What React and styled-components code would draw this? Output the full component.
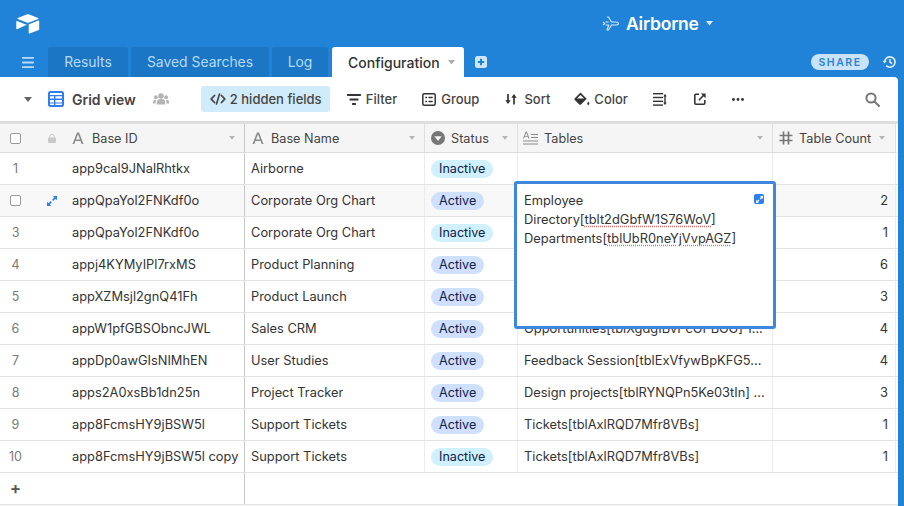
import React from 'react';
import styled, { createGlobalStyle } from 'styled-components';

const columns = '245px 180px 93px 255px 123px';

const rows = [
    { num: 1, id: 'app9cal9JNalRhtkx', name: 'Airborne', status: 'Inactive', tables: '', count: '' },
    { num: 2, id: 'appQpaYol2FNKdf0o', name: 'Corporate Org Chart', status: 'Active', tables: '', count: 2, hovered: true },
    { num: 3, id: 'appQpaYol2FNKdf0o', name: 'Corporate Org Chart', status: 'Inactive', tables: '', count: 1 },
    { num: 4, id: 'appj4KYMyIPl7rxMS', name: 'Product Planning', status: 'Active', tables: '', count: 6 },
    { num: 5, id: 'appXZMsjl2gnQ41Fh', name: 'Product Launch', status: 'Active', tables: '', count: 3 },
    { num: 6, id: 'appW1pfGBSObncJWL', name: 'Sales CRM', status: 'Active', tables: 'Opportunities[tblXgdgIBvPcGPBGG] 1...', count: 4 },
    { num: 7, id: 'appDp0awGIsNIMhEN', name: 'User Studies', status: 'Active', tables: 'Feedback Session[tblExVfywBpKFG5...', count: 4 },
    { num: 8, id: 'apps2A0xsBb1dn25n', name: 'Project Tracker', status: 'Active', tables: 'Design projects[tblRYNQPn5Ke03tIn] ...', count: 3 },
    { num: 9, id: 'app8FcmsHY9jBSW5l', name: 'Support Tickets', status: 'Active', tables: 'Tickets[tblAxlRQD7Mfr8VBs]', count: 1 },
    { num: 10, id: 'app8FcmsHY9jBSW5l copy', name: 'Support Tickets', status: 'Inactive', tables: 'Tickets[tblAxlRQD7Mfr8VBs]', count: 1 },
];

const Caret = ({ size = 8, color = '#666' }) => (
    <svg width={size} height={size * 0.625} viewBox="0 0 8 5">
        <path d="M0 0h8L4 5z" fill={color} />
    </svg>
);

const Logo = () => (
    <svg width="24" height="20" viewBox="0 0 24 20">
        <path d="M10.6.4 1.8 3.9c-.5.2-.5.9 0 1.100l8.900 3.500c.8.3 1.700.3 2.500 0l8.900-3.500c.5-.2.5-.9 0-1.100L13.200.4c-.8-.3-1.800-.3-2.600 0z" fill="#fff" />
        <path d="M12.700 10.800v8.300c0 .4.400.7.800.5l9.300-3.700c.3-.1.400-.3.400-.6V7c0-.4-.4-.7-.8-.5l-9.300 3.700c-.2.100-.4.300-.4.600z" fill="#fff" />
        <path d="M10.600 10.700 1.200 15.300c-.4.200-.9-.1-.9-.5V7.500c0-.2.100-.3.200-.4.100-.1.200-.1.300-.1l.2.100 9.500 3.700c.4.100.4.700.100.900z" fill="#fff" />
    </svg>
);

const Plane = () => (
    <svg width="17" height="15" viewBox="0 0 17 15" fill="none" stroke="#d5e9fa" strokeWidth="1.100" strokeLinejoin="round">
        <path d="M1 5.800 2.700 7.500 1 9.200M5 1h1.500l3 5h4.300c1.500 0 2.700.7 2.700 1.500S15.300 9 13.800 9H9.500l-3 5H5l1.700-5H3.500M6.700 6H3.500" />
    </svg>
);

const Hamburger = () => (
    <svg width="12" height="11" viewBox="0 0 12 11" fill="#b9dcf7">
        <rect y="0" width="12" height="1.800" rx=".5" />
        <rect y="4.600" width="12" height="1.800" rx=".5" />
        <rect y="9.200" width="12" height="1.800" rx=".5" />
    </svg>
);

const AddTab = () => (
    <svg width="12" height="12" viewBox="0 0 12 12">
        <rect width="12" height="12" rx="2.500" fill="#cfe6f9" />
        <path d="M6 2.800v6.400M2.800 6h6.400" stroke="#2083d7" strokeWidth="2" />
    </svg>
);

const History = () => (
    <svg width="15" height="14" viewBox="0 0 15 14" fill="none" stroke="#e2f0fb" strokeWidth="1.700">
        <path d="M2.700 7a5.200 5.200 0 1 1 1.500 3.700" />
        <path d="M.5 5.800h4.300L2.700 8.500z" fill="#e2f0fb" stroke="none" />
        <path d="M8 4v3.300l2.200 1.200" strokeWidth="1.500" />
    </svg>
);

const GridIcon = () => (
    <svg width="16" height="16" viewBox="0 0 16 16">
        <rect width="16" height="16" rx="2.500" fill="#2d7ff0" />
        <path d="M2 5.200h4v2.400H2zM7.400 5.200H14v2.400H7.400zM2 9h4v2.400H2zM7.400 9H14v2.400H7.400zM2 12.600h4V14H2zM7.400 12.600H14V14H7.400zM2 2h12v2H2z" fill="#fff" />
    </svg>
);

const People = () => (
    <svg width="16" height="12" viewBox="0 0 16 12" fill="#b4b4b4">
        <circle cx="8" cy="3" r="2.800" />
        <circle cx="2.900" cy="4.200" r="1.900" />
        <circle cx="13.100" cy="4.200" r="1.900" />
        <path d="M3.800 11.500V9c0-2 1.900-3 4.200-3s4.200 1 4.200 3v2.500zM0 10.500V8.700c0-1.300 1.100-2 2.700-2l.6.100c-.5.600-.7 1.300-.7 2.100v1.600zM16 10.500V8.700c0-1.300-1.100-2-2.700-2l-.6.100c.5.600.7 1.300.7 2.100v1.600z" />
    </svg>
);

const HiddenIcon = () => (
    <svg width="16" height="12" viewBox="0 0 16 12" fill="none" stroke="#444" strokeWidth="1.800" strokeLinecap="round" strokeLinejoin="round">
        <path d="M4.500 2.500 1.200 6l3.300 3.500M11.500 2.500 14.800 6l-3.300 3.500" />
        <path d="M9.500 1 6.500 11" strokeWidth="1.600" />
    </svg>
);

const FilterIcon = () => (
    <svg width="14" height="11" viewBox="0 0 14 11" fill="#333">
        <rect width="14" height="1.900" rx=".6" />
        <rect x="2.500" y="4.500" width="9" height="1.900" rx=".6" />
        <rect x="5" y="9" width="4" height="1.900" rx=".6" />
    </svg>
);

const GroupIcon = () => (
    <svg width="14" height="13" viewBox="0 0 14 13" fill="none" stroke="#333" strokeWidth="1.500">
        <rect x=".8" y=".8" width="12.400" height="11.400" rx="1.500" />
        <path d="M3.300 4.500H5M6.500 4.500h4.200M3.300 8.500H5M6.500 8.500h4.200" />
    </svg>
);

const SortIcon = () => (
    <svg width="12" height="12" viewBox="0 0 12 12" fill="none" stroke="#333" strokeWidth="1.700">
        <path d="M3 1v8.500M9 3v8.500" />
        <path d="M.3 7.200h5.400L3 11zM6.300 4.800h5.400L9 1z" fill="#333" stroke="none" />
    </svg>
);

const ColorIcon = () => (
    <svg width="16" height="14" viewBox="0 0 16 14" fill="#333">
        <path d="M6.500.6 12.700 6.800 7 12.500c-.5.500-1.200.5-1.700 0L.8 8c-.5-.5-.5-1.200 0-1.700z" />
        <path d="M6.500 3 2.900 6.600h7.200z" fill="#fff" />
        <path d="M14.300 9.500c.7 1 1.100 1.700 1.100 2.300a1.100 1.100 0 0 1-2.200 0c0-.6.400-1.300 1.100-2.300z" />
    </svg>
);

const RowHeightIcon = () => (
    <svg width="14" height="13" viewBox="0 0 14 13" fill="#333">
        <rect width="10" height="1.400" />
        <rect y="3.800" width="10" height="1.400" />
        <rect y="7.600" width="10" height="1.400" />
        <rect y="11.400" width="10" height="1.400" />
        <path d="M12 3v7" stroke="#333" strokeWidth="1.400" />
        <path d="M10.300 3.500 12 .8l1.700 2.700zM10.300 9.500 12 12.200l1.700-2.700z" />
    </svg>
);

const ShareIcon = () => (
    <svg width="12" height="12" viewBox="0 0 12 12" fill="none" stroke="#333" strokeWidth="1.600">
        <path d="M5 1.200H1.800a1 1 0 0 0-1 1v8a1 1 0 0 0 1 1h8a1 1 0 0 0 1-1V7" />
        <path d="M4.800 7.200 10 2" />
        <path d="M6.800.4h4.800v4.800z" fill="#333" stroke="none" />
    </svg>
);

const Dots = () => (
    <svg width="12" height="3" viewBox="0 0 12 3" fill="#333">
        <circle cx="1.500" cy="1.500" r="1.400" />
        <circle cx="6" cy="1.500" r="1.400" />
        <circle cx="10.500" cy="1.500" r="1.400" />
    </svg>
);

const SearchIcon = () => (
    <svg width="15" height="15" viewBox="0 0 15 15" fill="none" stroke="#777" strokeWidth="2">
        <circle cx="6" cy="6" r="4.600" />
        <path d="M9.500 9.500 14 14" strokeLinecap="round" />
    </svg>
);

const Lock = () => (
    <svg width="8" height="9" viewBox="0 0 8 9" fill="#c9c9c9">
        <rect y="3.500" width="8" height="5.500" rx="1" />
        <path d="M1.800 4V2.500a2.200 2.200 0 0 1 4.400 0V4" fill="none" stroke="#c9c9c9" />
    </svg>
);

const TextType = () => (
    <svg width="12" height="12" viewBox="0 0 12 12">
        <path d="M.5 12 5 .5h2L11.500 12H9.700L8.600 9H3.400L2.300 12zM4 7.400h4L6 2.300z" fill="#8a8a8a" />
    </svg>
);

const SelectType = () => (
    <svg width="14" height="14" viewBox="0 0 14 14">
        <circle cx="7" cy="7" r="7" fill="#777" />
        <path d="M3.300 5.300h7.400L7 10z" fill="#f5f5f5" />
    </svg>
);

const LongTextType = () => (
    <svg width="16" height="14" viewBox="0 0 16 14" fill="#8a8a8a">
        <path d="M0 7.500 2.700.5h1.100L6.500 7.500H5.400L4.800 5.800H1.700l-.6 1.700zM2 4.900h2.500L3.300 1.800z" />
        <rect x="8" y="3" width="7" height="1" />
        <rect x="8" y="6" width="7" height="1" />
        <rect y="9.500" width="15" height="1" />
        <rect y="12.500" width="15" height="1" />
    </svg>
);

const NumberType = () => (
    <svg width="14" height="14" viewBox="0 0 14 14" fill="none" stroke="#777" strokeWidth="1.700">
        <path d="M4.500.5v13M9.500.5v13M.5 4.500h13M.5 9.500h13" />
    </svg>
);

const ExpandIcon = ({ color = '#2d7ff0' }) => (
    <svg width="10" height="10" viewBox="0 0 10 10" fill={color}>
        <path d="M5.800 0H10v4.200L8.500 2.700 6.300 4.900 5.100 3.700l2.200-2.200zM4.200 10H0V5.800l1.500 1.500 2.200-2.200 1.200 1.200-2.200 2.200z" />
    </svg>
);

const Check = styled.span`
    width: 11px;
    height: 11px;
    border: 1px solid #9a9a9a;
    border-radius: 2px;
    background: #fff;
    box-sizing: border-box;
`;

function App() {
    return (
        <Page>
            <GlobalStyle />
            <TopBar>
                <LogoSlot><Logo /></LogoSlot>
                <BaseTitle>
                    <Plane />
                    <BaseName>Airborne</BaseName>
                    <Caret size={7} color="#d9ecfb" />
                </BaseTitle>
            </TopBar>
            <TabBar>
                <MenuSlot><Hamburger /></MenuSlot>
                <Tab $width={80}>Results</Tab>
                <Tab $width={138}>Saved Searches</Tab>
                <Tab $width={56}>Log</Tab>
                <ActiveTab>
                    Configuration
                    <Caret size={7} color="#aaa" />
                </ActiveTab>
                <AddSlot><AddTab /></AddSlot>
                <TabSpacer />
                <ShareButton>SHARE</ShareButton>
                <History />
            </TabBar>
            <Panel>
                <Toolbar>
                    <ViewCaret><Caret size={8} color="#666" /></ViewCaret>
                    <GridIcon />
                    <ViewName>Grid view</ViewName>
                    <People />
                    <HiddenButton><HiddenIcon />2 hidden fields</HiddenButton>
                    <ToolButton $left={17}><FilterIcon />Filter</ToolButton>
                    <ToolButton $left={25}><GroupIcon />Group</ToolButton>
                    <ToolButton $left={26} $gap={7}><SortIcon />Sort</ToolButton>
                    <ToolButton $left={24} $gap={4}><ColorIcon />Color</ToolButton>
                    <ToolButton $left={25}><RowHeightIcon /></ToolButton>
                    <ToolButton $left={27}><ShareIcon /></ToolButton>
                    <ToolButton $left={26}><Dots /></ToolButton>
                    <TabSpacer />
                    <SearchSlot><SearchIcon /></SearchSlot>
                </Toolbar>
                <Grid>
                    <HeaderRow>
                        <LeftHeaderCell>
                            <CheckSlot><Check /></CheckSlot>
                            <HandleSlot><Lock /></HandleSlot>
                            <HeaderLabel $gap={8}><TextType />Base ID</HeaderLabel>
                            <Caret size={6} color="#b5b5b5" />
                        </LeftHeaderCell>
                        <HeaderCell>
                            <HeaderLabel><TextType />Base Name</HeaderLabel>
                            <Caret size={6} color="#b5b5b5" />
                        </HeaderCell>
                        <HeaderCell $left={6}>
                            <HeaderLabel $gap={6}><SelectType />Status</HeaderLabel>
                            <Caret size={6} color="#b5b5b5" />
                        </HeaderCell>
                        <HeaderCell $left={5}>
                            <HeaderLabel $gap={5}><LongTextType />Tables</HeaderLabel>
                            <Caret size={6} color="#b5b5b5" />
                        </HeaderCell>
                        <HeaderCell $left={6} $right={10}>
                            <HeaderLabel $gap={6}><NumberType />Table Count</HeaderLabel>
                            <Caret size={6} color="#b5b5b5" />
                        </HeaderCell>
                    </HeaderRow>
                    {rows.map((row) => (
                        <Row key={row.num} $hovered={row.hovered}>
                            <LeftCell>
                                <CheckSlot>
                                    {row.hovered ? <Check /> : <RowNum>{row.num}</RowNum>}
                                </CheckSlot>
                                <HandleSlot>
                                    {row.hovered && <ExpandIcon />}
                                </HandleSlot>
                                <CellText>{row.id}</CellText>
                            </LeftCell>
                            <Cell><CellText>{row.name}</CellText></Cell>
                            <Cell><Pill $status={row.status}>{row.status}</Pill></Cell>
                            <Cell><CellText>{row.tables}</CellText></Cell>
                            <CountCell>{row.count}</CountCell>
                        </Row>
                    ))}
                    <AddRow>
                        <AddCell>
                            <CheckSlot><PlusSign>+</PlusSign></CheckSlot>
                        </AddCell>
                    </AddRow>
                    <Editor>
                        <EditorLine>Employee</EditorLine>
                        <EditorLine>Directory[<Misspelled>tblt2dGbfW1S76WoV</Misspelled>]</EditorLine>
                        <EditorLine>Departments[<Misspelled>tblUbR0neYjVvpAGZ</Misspelled>]</EditorLine>
                        <ExpandBadge><ExpandIcon color="#fff" /></ExpandBadge>
                    </Editor>
                </Grid>
            </Panel>
        </Page>
    );
}

const GlobalStyle = createGlobalStyle`
    html, body {
        margin: 0;
        padding: 0;
        overflow: hidden;
    }

    body {
        font-family: Inter, "Liberation Sans", sans-serif;
        font-size: 13px;
        color: #333;
    }
`;

const Page = styled.div`
    display: flex;
    flex-direction: column;
    width: 904px;
    height: 506px;
    background: #2083d7;
    overflow: hidden;
`;

const TopBar = styled.div`
    display: flex;
    align-items: center;
    height: 47px;
    flex: none;
`;

const LogoSlot = styled.div`
    display: flex;
    width: 602px;
    padding-left: 16px;
    box-sizing: border-box;
`;

const BaseTitle = styled.div`
    display: flex;
    align-items: center;
`;

const BaseName = styled.span`
    margin: 0 7px 0 7px;
    color: #fff;
    font-size: 17.500px;
    font-weight: 600;
    letter-spacing: -0.2px;
`;

const TabBar = styled.div`
    display: flex;
    align-items: center;
    height: 30px;
    flex: none;
    padding-right: 7px;
`;

const MenuSlot = styled.div`
    display: flex;
    width: 48px;
    padding-left: 22px;
    box-sizing: border-box;
`;

const Tab = styled.div`
    display: flex;
    align-items: center;
    justify-content: center;
    width: ${(props) => props.$width}px;
    height: 30px;
    margin-right: 3px;
    border-radius: 3px 3px 0 0;
    background: #1b76c5;
    color: #b5daf6;
    font-size: 13.900px;
`;

const ActiveTab = styled.div`
    display: flex;
    align-items: center;
    justify-content: space-between;
    width: 132px;
    height: 30px;
    margin-left: 1px;
    padding: 0 9px 0 16px;
    box-sizing: border-box;
    border-radius: 3px 3px 0 0;
    background: #fff;
    color: #333;
    font-size: 14px;
    font-weight: 500;
`;

const AddSlot = styled.div`
    display: flex;
    margin-left: 11px;
`;

const TabSpacer = styled.div`
    flex: 1;
`;

const ShareButton = styled.div`
    display: flex;
    align-items: center;
    justify-content: center;
    width: 58px;
    height: 16px;
    margin-right: 13px;
    border-radius: 8px;
    background: #c9e3f8;
    color: #2b83d3;
    font-size: 10.500px;
    font-weight: 600;
    letter-spacing: 1.500px;
`;

const Panel = styled.div`
    display: flex;
    flex-direction: column;
    flex: 1;
    margin-right: 6px;
    border-top-right-radius: 4px;
    background: #fff;
    overflow: hidden;
    min-height: 0;
`;

const Toolbar = styled.div`
    display: flex;
    align-items: center;
    flex: none;
    height: 47px;
    box-sizing: border-box;
    padding: 0 18px 0 0;
    border-bottom: 3px solid #dedede;
`;

const ViewCaret = styled.div`
    display: flex;
    width: 48px;
    padding-left: 24px;
    box-sizing: border-box;
`;

const ViewName = styled.span`
    margin: 0 17px 0 8px;
    font-size: 14px;
    font-weight: 600;
    color: #444;
`;

const HiddenButton = styled.div`
    display: flex;
    align-items: center;
    gap: 4px;
    width: 129px;
    height: 26px;
    margin-left: 32px;
    padding-left: 9px;
    box-sizing: border-box;
    border-radius: 3px;
    background: #d0ebf9;
    color: #444;
    font-size: 13px;
    font-weight: 500;
    white-space: nowrap;
`;

const ToolButton = styled.div`
    display: flex;
    align-items: center;
    gap: ${(props) => props.$gap || 5}px;
    margin-left: ${(props) => props.$left}px;
    color: #444;
    font-size: 13px;
    font-weight: 500;
`;

const SearchSlot = styled.div`
    display: flex;
`;

const Grid = styled.div`
    position: relative;
    flex: 1;
    min-height: 0;
    background: #f5f5f5;
`;

const HeaderRow = styled.div`
    display: grid;
    grid-template-columns: ${columns};
    height: 29px;
    box-sizing: border-box;
    border-bottom: 1px solid #dcdcdc;
    border-right: 2px solid #fff;
    background: #f5f5f5;
`;

const Row = styled.div`
    display: grid;
    grid-template-columns: ${columns};
    height: 32px;
    box-sizing: border-box;
    border-bottom: 1px solid #e3e3e3;
    background: ${(props) => (props.$hovered ? '#f8f8f8' : '#fff')};
`;

const AddRow = styled.div`
    display: flex;
    height: 32px;
    box-sizing: border-box;
    border-bottom: 1px solid #e3e3e3;
    background: #fff;
`;

const AddCell = styled.div`
    display: flex;
    align-items: center;
    width: 245px;
    box-sizing: border-box;
    border-right: 1px solid #c8c8c8;
`;

const PlusSign = styled.span`
    font-size: 17px;
    font-weight: 600;
    color: #555;
    line-height: 1;
`;

const LeftCell = styled.div`
    display: flex;
    align-items: center;
    box-sizing: border-box;
    border-right: 1px solid #c8c8c8;
    min-width: 0;
`;

const LeftHeaderCell = styled(LeftCell)`
    padding-right: 9px;
`;

const CheckSlot = styled.div`
    display: flex;
    align-items: center;
    justify-content: center;
    flex: none;
    width: 31px;
`;

const HandleSlot = styled.div`
    display: flex;
    align-items: center;
    justify-content: center;
    flex: none;
    width: 41px;
`;

const RowNum = styled.span`
    color: #7a7a7a;
    font-size: 12.500px;
`;

const HeaderCell = styled.div`
    display: flex;
    align-items: center;
    box-sizing: border-box;
    padding: 0 ${(props) => props.$right || 9}px 0 ${(props) => props.$left || 7}px;
    border-right: 1px solid #e0e0e0;
`;

const HeaderLabel = styled.div`
    display: flex;
    align-items: center;
    flex: 1;
    gap: ${(props) => props.$gap || 7}px;
    color: #444;
    font-size: 12.700px;
    white-space: nowrap;
`;

const Cell = styled.div`
    display: flex;
    align-items: center;
    box-sizing: border-box;
    padding: 0 6px;
    border-right: 1px solid #ececec;
    min-width: 0;
`;

const CountCell = styled(Cell)`
    justify-content: flex-end;
    padding-right: 7px;
    color: #333;
    font-size: 12.850px;
`;

const CellText = styled.span`
    color: #333;
    font-size: 12.850px;
    white-space: nowrap;
    overflow: hidden;
`;

const Pill = styled.span`
    display: inline-flex;
    align-items: center;
    height: 18px;
    padding: 0 8px;
    border-radius: 9px;
    background: ${(props) => (props.$status === 'Active' ? '#cfdfff' : '#d0f0fd')};
    color: #102046;
    font-size: 12.600px;
`;

const Editor = styled.div`
    position: absolute;
    top: 57px;
    left: 514px;
    width: 262px;
    height: 148px;
    box-sizing: border-box;
    padding: 7px 7px;
    border: 3px solid #3f86dd;
    border-radius: 3px;
    background: #fff;
    z-index: 2;
`;

const EditorLine = styled.div`
    color: #333;
    font-size: 12.850px;
    line-height: 19px;
    white-space: nowrap;
`;

const Misspelled = styled.span`
    text-decoration: underline dotted #e8706b;
    text-underline-offset: 2px;
`;

const ExpandBadge = styled.div`
    position: absolute;
    top: 10px;
    right: 9px;
    display: flex;
    align-items: center;
    justify-content: center;
    width: 10px;
    height: 10px;
    border-radius: 2px;
    background: #2d7ff0;

    svg {
        width: 7px;
        height: 7px;
    }
`;

export default App;
